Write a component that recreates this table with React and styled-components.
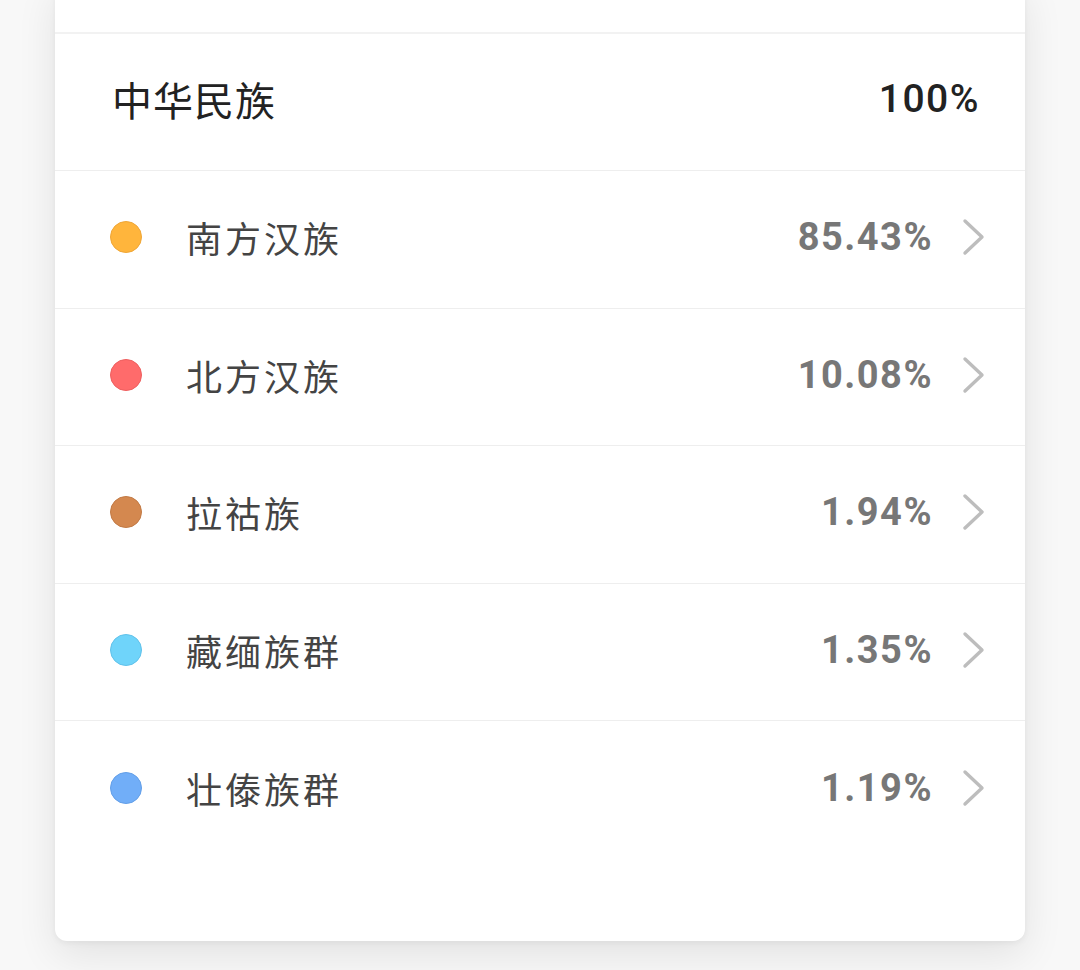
import styled, { createGlobalStyle } from "styled-components";

const GlobalStyle = createGlobalStyle`
  html, body {
    margin: 0;
    padding: 0;
    background: #f8f8f8;
    font-family: Roboto, "Noto Sans CJK SC", sans-serif;
  }
`;

const rows = [
  { name: "南方汉族", value: "85.43%", color: "#FFB53C", border: "#EFA637" },
  { name: "北方汉族", value: "10.08%", color: "#FF6B6B", border: "#EE5F5F" },
  { name: "拉祜族", value: "1.94%", color: "#D4884F", border: "#C27A45" },
  { name: "藏缅族群", value: "1.35%", color: "#6FD4FA", border: "#61C2EA" },
  { name: "壮傣族群", value: "1.19%", color: "#71AEF8", border: "#639FE8" },
];

const Chevron = () => (
  <svg width="24" height="38" viewBox="0 0 24 38" fill="none">
    <path d="M4 3 L21 19 L4 35" stroke="#bdbdbd" strokeWidth="3.4" strokeLinecap="round" strokeLinejoin="round" />
  </svg>
);

export default function App() {
  return (
    <Page>
      <GlobalStyle />
      <Card>
        <TopSpace />
        <Header>
          <HeaderName>中华民族</HeaderName>
          <HeaderValue>100%</HeaderValue>
        </Header>
        {rows.map((r, i) => (
          <Row key={r.name} last={i === rows.length - 1}>
            <Dot color={r.color} border={r.border} />
            <Name>{r.name}</Name>
            <Value>{r.value}</Value>
            <Chevron />
          </Row>
        ))}
      </Card>
    </Page>
  );
}

const Page = styled.div`
  min-height: 970px;
  box-sizing: border-box;
  padding: 0 55px 30px;
  overflow: hidden;
`;

const Card = styled.div`
  margin-top: -20px;
  padding-bottom: 82px;
  background: #fff;
  border-radius: 12px;
  box-shadow: 0 14px 40px rgba(0, 0, 0, 0.09), 0 2px 6px rgba(0, 0, 0, 0.05);
`;

const TopSpace = styled.div`
  height: 54px;
  border-bottom: 2px solid #f2f2f2;
  box-sizing: border-box;
`;

const Header = styled.div`
  height: 137px;
  box-sizing: border-box;
  display: flex;
  align-items: center;
  justify-content: space-between;
  padding: 0 45px 6px 57px;
  border-bottom: 1px solid #eeeeee;
`;

const HeaderName = styled.div`
  font-size: 40px;
  color: #222;
  letter-spacing: 1px;
`;

const HeaderValue = styled.div`
  font-size: 39px;
  font-weight: 500;
  color: #222;
  letter-spacing: 1.5px;
`;

const Row = styled.div`
  height: 137.5px;
  box-sizing: border-box;
  display: flex;
  align-items: center;
  padding: 0 40px 4px 55px;
  border-bottom: ${p => (p.last ? "none" : "1px solid #eeeeee")};
`;

const Dot = styled.span`
  width: 32px;
  height: 32px;
  box-sizing: border-box;
  border-radius: 50%;
  background: ${p => p.color};
  border: 1.5px solid ${p => p.border};
  flex-shrink: 0;
`;

const Name = styled.div`
  margin-left: 44px;
  flex: 1;
  font-size: 36px;
  color: #444;
  letter-spacing: 3px;
`;

const Value = styled.div`
  font-size: 38px;
  font-weight: 700;
  color: #777;
  letter-spacing: 1.5px;
  margin-right: 28px;
`;
